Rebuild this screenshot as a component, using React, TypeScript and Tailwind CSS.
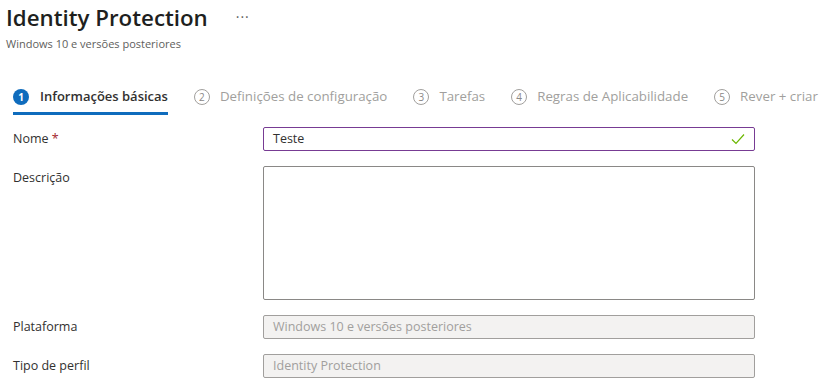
import React from 'react'

const font = { fontFamily: '"Open Sans", "Noto Sans", sans-serif' }

function Step({ n, label, active }: { n: number; label: string; active?: boolean }) {
  return (
    <div className={active ? 'flex items-center h-[36px] border-b-[3px] border-[#0f6cbd] pt-[3px]' : 'flex items-center h-[36px] pt-[3px] border-b-[3px] border-transparent'}>
      {active ? (
        <span className="w-[16px] h-[16px] rounded-full bg-[#0f6cbd] text-white text-[10px] font-bold flex items-center justify-center">{n}</span>
      ) : (
        <span className="w-[16px] h-[16px] rounded-full border border-[#a19f9d] text-[#8a8886] text-[10px] flex items-center justify-center">{n}</span>
      )}
      <span className={active ? 'ml-[11px] text-[13px] font-semibold text-[#323130]' : 'ml-[10px] text-[13.3px] text-[#a19f9d]'}>{label}</span>
    </div>
  )
}

function Row({ label, children, required, top }: { label: string; children: React.ReactNode; required?: boolean; top?: boolean }) {
  return (
    <div className={top ? 'flex items-start' : 'flex items-center'}>
      <div className={top ? 'w-[250px] text-[12.5px] text-[#323130] pt-[3px]' : 'w-[250px] text-[12.5px] text-[#323130]'}>
        {label}
        {required && <span className="text-[#a4262c]"> *</span>}
      </div>
      {children}
    </div>
  )
}

export default function App() {
  return (
    <div className="w-[830px] h-[385px] bg-white overflow-hidden" style={font}>
      <div className="pl-[6px] pt-[2px]">
        <div className="flex items-center h-[32px]">
          <h1 className="text-[22.3px] font-semibold text-[#201f1e] leading-[30px]">Identity Protection</h1>
          <span className="ml-[28px] text-[#605e5c] text-[14px] tracking-[1px] -mt-[4px]">···</span>
        </div>
        <div className="text-[11px] text-[#605e5c] leading-[16px] mt-[2px]">Windows 10 e versões posteriores</div>
      </div>

      <div className="flex items-center gap-[26px] pl-[13px] mt-[27px] whitespace-nowrap">
        <Step n={1} label="Informações básicas" active />
        <Step n={2} label="Definições de configuração" />
        <Step n={3} label="Tarefas" />
        <Step n={4} label="Regras de Aplicabilidade" />
        <Step n={5} label="Rever + criar" />
      </div>

      <div className="pl-[13px] mt-[12px] flex flex-col gap-[15px]">
        <Row label="Nome" required>
          <div className="w-[492px] h-[24px] border border-[#773b93] rounded-[2px] flex items-center px-[9px] text-[12.5px] text-[#323130]">
            <span className="flex-1">Teste</span>
            <svg width="14" height="12" viewBox="0 0 14 12" fill="none">
              <path d="M1 6.5 L5 10.5 L13 1.5" stroke="#6bb700" strokeWidth="1.2" />
            </svg>
          </div>
        </Row>
        <Row label="Descrição" top>
          <div className="w-[492px] h-[134px] border border-[#8a8886] rounded-[2px]" />
        </Row>
        <Row label="Plataforma">
          <div className="w-[492px] h-[24px] border border-[#a19f9d] rounded-[2px] bg-[#f3f2f1] flex items-center px-[9px] text-[12.5px] text-[#a19f9d]">
            Windows 10 e versões posteriores
          </div>
        </Row>
        <Row label="Tipo de perfil">
          <div className="w-[492px] h-[24px] border border-[#a19f9d] rounded-[2px] bg-[#f3f2f1] flex items-center px-[9px] text-[12.5px] text-[#a19f9d]">
            Identity Protection
          </div>
        </Row>
      </div>
    </div>
  )
}
